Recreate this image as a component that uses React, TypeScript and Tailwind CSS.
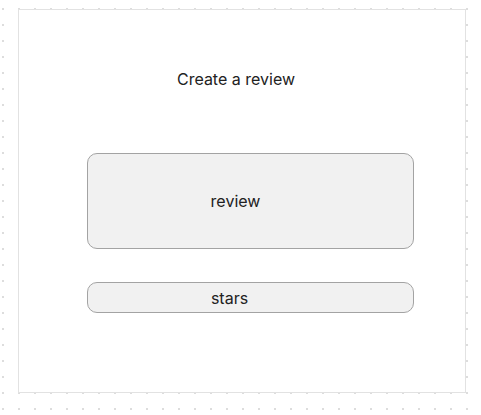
import React from "react";

// Dotted canvas with a single review form frame on it
export default function App() {
  return (
    <div
      className="w-[481px] h-[415px] bg-white bg-[radial-gradient(circle_at_1px_1px,#dddddd_1px,transparent_0)] bg-[size:16px_16px] bg-[position:2px_8px] pt-[9px] pl-[18px] text-[#222222]"
      style={{ fontFamily: "Inter, 'Liberation Sans', sans-serif" }}
    >
      <div className="w-[448px] h-[384px] bg-white border border-[#e2e2e2] flex flex-col">
        <h1 className="mt-[57px] pr-[12px] text-center text-[16px] leading-6 font-normal">
          Create a review
        </h1>

        {/* review field */}
        <div className="mt-[62px] ml-[68px] w-[327px] h-[96px] rounded-[10px] border border-[#a3a3a3] bg-[#f1f1f1] flex items-center justify-center pr-[30px] text-[16px] leading-6">
          review
        </div>

        {/* stars field */}
        <div className="mt-[33px] ml-[68px] w-[327px] h-[31px] rounded-[10px] border border-[#a3a3a3] bg-[#f1f1f1] flex items-center justify-center pr-[42px] text-[16px] leading-6">
          stars
        </div>
      </div>
    </div>
  );
}
